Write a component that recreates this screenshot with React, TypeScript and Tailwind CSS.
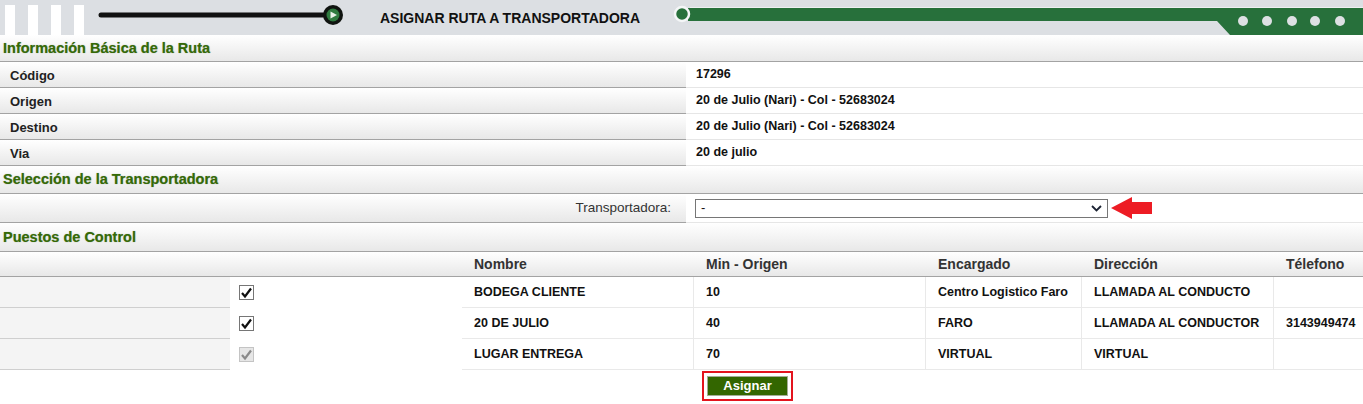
import React from "react";

const INFO = [
  { label: "Código", value: "17296" },
  { label: "Origen", value: "20 de Julio (Nari) - Col - 52683024" },
  { label: "Destino", value: "20 de Julio (Nari) - Col - 52683024" },
  { label: "Via", value: "20 de julio" },
];

const PUESTOS = [
  {
    nombre: "BODEGA CLIENTE",
    min: "10",
    encargado: "Centro Logistico Faro",
    direccion: "LLAMADA AL CONDUCTO",
    telefono: "",
    disabled: false,
  },
  {
    nombre: "20 DE JULIO",
    min: "40",
    encargado: "FARO",
    direccion: "LLAMADA AL CONDUCTOR",
    telefono: "3143949474",
    disabled: false,
  },
  {
    nombre: "LUGAR ENTREGA",
    min: "70",
    encargado: "VIRTUAL",
    direccion: "VIRTUAL",
    telefono: "",
    disabled: true,
  },
];

const COLS = "grid grid-cols-[230px_232px_232px_232px_156px_192px_1fr]";

function SectionTitle({ children, h }: { children: React.ReactNode; h: string }) {
  return (
    <div
      className={`${h} flex items-center border-b border-[#a3a3a3] bg-gradient-to-b from-white to-[#e8e8e8] pl-[3px] pt-[1px] text-[14.5px] font-bold text-[#356a06] [text-shadow:0_0_1px_rgba(20,50,0,0.45)]`}
    >
      {children}
    </div>
  );
}

function Check({ disabled }: { disabled?: boolean }) {
  return (
    <span
      className={`flex h-[15px] w-[15px] items-center justify-center border ${
        disabled ? "border-[#c4c4c4] bg-[#e6e6e6]" : "border-[#767676] bg-white"
      }`}
    >
      <svg width="13" height="13" viewBox="0 0 13 13">
        <path
          d="M2 7 L5 10.5 L11 2.5"
          fill="none"
          stroke={disabled ? "#8a8a8a" : "#111"}
          strokeWidth="2.2"
        />
      </svg>
    </span>
  );
}

function Banner() {
  return (
    <div className="flex h-[35px] bg-[#dcdfe3]">
      <div className="flex w-[95px] items-end gap-[13px] pl-[5px]">
        <div className="h-[30px] w-[10px] bg-white" />
        <div className="h-[30px] w-[10px] bg-white" />
        <div className="h-[30px] w-[10px] bg-white" />
        <div className="h-[30px] w-[10px] bg-white" />
      </div>
      <svg width="255" height="35" viewBox="0 0 255 35">
        <line x1="6" y1="15" x2="236" y2="15" stroke="#111" strokeWidth="5" strokeLinecap="round" />
        <circle cx="238" cy="15" r="10" fill="#101410" />
        <circle cx="238" cy="15" r="6.5" fill="#2f7b3f" />
        <polygon points="235.5,11.5 235.5,18.5 242,15" fill="#e8f2e8" />
      </svg>
      <div className="ml-[30px] flex items-center pt-[1px] text-[14px] font-bold text-[#111]">
        ASIGNAR RUTA A TRANSPORTADORA
      </div>
      <svg className="ml-auto" width="695" height="35" viewBox="0 0 695 35">
        <line x1="22" y1="7.5" x2="695" y2="7.5" stroke="#eef0f2" strokeWidth="1" />
        <path d="M20 8 L695 8 L695 35 L562 35 L549 21 L20 21 Z" fill="#27703b" />
        <circle cx="14" cy="14" r="7" fill="#27703b" stroke="#f4f6f7" strokeWidth="2.5" />
        {[575, 599, 624, 647, 672].map((x) => (
          <circle key={x} cx={x} cy="21" r="5" fill="#dde0e3" />
        ))}
      </svg>
    </div>
  );
}

export default function App() {
  return (
    <div className="min-h-screen bg-white font-['Liberation_Sans',Arial,sans-serif] text-[#111]">
      <Banner />

      <SectionTitle h="h-[27px]">Información Básica de la Ruta</SectionTitle>
      {INFO.map((row) => (
        <div key={row.label} className="grid h-[26px] grid-cols-[686px_1fr]">
          <div className="flex items-center border-b border-[#a3a3a3] bg-gradient-to-b from-white to-[#e8e8e8] pl-[10px] pt-[2px] text-[13px] font-bold text-[#222]">
            {row.label}
          </div>
          <div className="flex items-center border-b border-[#e6e6e6] pl-[10px] text-[12.5px] font-bold">
            {row.value}
          </div>
        </div>
      ))}

      <SectionTitle h="h-[28px]">Selección de la Transportadora</SectionTitle>
      <div className="grid h-[29px] grid-cols-[686px_1fr]">
        <div className="flex items-center justify-end border-b border-[#a3a3a3] bg-gradient-to-b from-white to-[#e8e8e8] pr-[15px] text-[13.5px] text-[#333]">
          Transportadora:
        </div>
        <div className="flex items-center gap-[3px] border-b border-[#e6e6e6] pl-[9px]">
          <div className="flex h-[19px] w-[413px] items-center justify-between border border-[#767676] bg-white pl-[5px] pr-[5px] text-[13px]">
            <span>-</span>
            <svg width="11" height="7" viewBox="0 0 11 7">
              <path d="M1 1 L5.5 5.5 L10 1" fill="none" stroke="#1b2333" strokeWidth="1.8" />
            </svg>
          </div>
          <svg width="42" height="24" viewBox="0 0 42 24">
            <polygon points="0,12 21,1 21,6 41,6 41,18 21,18 21,23" fill="#ed1c24" />
          </svg>
        </div>
      </div>

      <SectionTitle h="h-[29px]">Puestos de Control</SectionTitle>
      <div
        className={`${COLS} h-[25px] items-center border-b border-[#a3a3a3] bg-gradient-to-b from-white to-[#e8e8e8] pt-[1px] text-[14px] font-bold text-[#333]`}
      >
        <div />
        <div />
        <div className="pl-[12px]">Nombre</div>
        <div className="pl-[12px]">Min - Origen</div>
        <div className="pl-[12px]">Encargado</div>
        <div className="pl-[12px]">Dirección</div>
        <div className="pl-[12px]">Télefono</div>
      </div>
      {PUESTOS.map((p) => (
        <div key={p.nombre} className={`${COLS} h-[31px] text-[12.5px] font-bold`}>
          <div className="border-b border-[#cfcfcf] bg-[#f4f4f4]" />
          <div className="flex items-center pl-[9px]">
            <Check disabled={p.disabled} />
          </div>
          <div className="flex items-center border-b border-r border-[#e9e9e9] pl-[12px] pt-[1px]">{p.nombre}</div>
          <div className="flex items-center border-b border-r border-[#e9e9e9] pl-[12px] pt-[1px]">{p.min}</div>
          <div className="flex items-center border-b border-r border-[#e9e9e9] pl-[12px] pt-[1px]">{p.encargado}</div>
          <div className="flex items-center border-b border-r border-[#e9e9e9] pl-[12px] pt-[1px]">{p.direccion}</div>
          <div className="flex items-center border-b border-[#e9e9e9] pl-[12px] pt-[1px]">{p.telefono}</div>
        </div>
      ))}

      <div className="pl-[702px] pt-[1px]">
        <div className="inline-flex border-2 border-[#e3141e] px-[3px] py-[3px]">
          <button className="flex h-[20px] w-[81px] items-center justify-center border border-[#a4ad97] bg-[#336600] text-[13px] font-bold text-white">
            Asignar
          </button>
        </div>
      </div>
    </div>
  );
}
